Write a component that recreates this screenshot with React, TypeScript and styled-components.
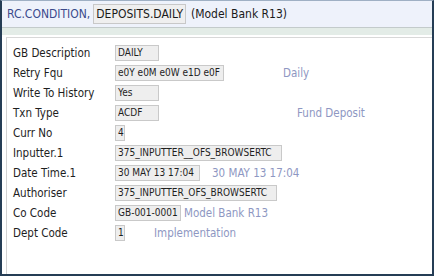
import React from "react";
import styled, { createGlobalStyle } from "styled-components";

const Global = createGlobalStyle`
  html, body { margin: 0; padding: 0; background: #ffffff; }
  body { font-family: "DejaVu Sans Condensed", "DejaVu Sans", sans-serif; }
`;

const Frame = styled.div`
  width: 434px;
  height: 276px;
  box-sizing: border-box;
  border-left: 2px solid #253d55;
  border-right: 2px solid #253d55;
  border-bottom: 2px solid #253d55;
  border-top: 1px solid #9fb0c4;
  display: flex;
  flex-direction: column;
  background: #ffffff;
  overflow: hidden;
`;

const Header = styled.div`
  height: 26px;
  background: #eef2fb;
  display: flex;
  align-items: center;
  padding-left: 5px;
  gap: 3px;
  font-size: 12px;
`;

const TitleText = styled.span`
  color: #3b4a8c;
`;

const TitleBox = styled.span`
  background: #efefef;
  border: 1px solid #c8c8c8;
  color: #1a1a1a;
  padding: 2px 2px;
`;

const TitleTail = styled.span`
  color: #1a1a1a;
  margin-left: 2px;
`;

const Strip = styled.div`
  height: 7px;
  border-top: 1px solid #c3cbcb;
  background: #e3ece7;
`;

const Body = styled.div`
  flex: 1;
  padding: 2px 0 0 4px;
  display: flex;
`;

const Panel = styled.div`
  flex: 1;
  border-left: 1px solid #d2d2d2;
  border-top: 1px solid #d8d8d8;
  padding: 5px 0 0 6px;
  display: flex;
  flex-direction: column;
`;

const Row = styled.div`
  height: 20px;
  display: flex;
  align-items: center;
`;

const Label = styled.span`
  width: 102px;
  font-size: 11.5px;
  color: #1e1e1e;
  white-space: nowrap;
`;

const Value = styled.span<{ $w: number }>`
  width: ${(p) => p.$w}px;
  height: 16px;
  box-sizing: border-box;
  background: #eeeeee;
  border: 1px solid #c9c9c9;
  font-size: 10px;
  line-height: 14px;
  color: #1e1e1e;
  padding-left: 2px;
  white-space: nowrap;
  overflow: hidden;
`;

const Desc = styled.span<{ $gap: number }>`
  margin-left: ${(p) => p.$gap}px;
  font-size: 11.5px;
  color: #8e97c2;
  white-space: nowrap;
`;

type Field = { label: string; value: string; w: number; desc?: string; gap?: number };

const fields: Field[] = [
  { label: "GB Description", value: "DAILY", w: 44 },
  { label: "Retry Fqu", value: "e0Y e0M e0W e1D e0F", w: 109, desc: "Daily", gap: 59 },
  { label: "Write To History", value: "Yes", w: 44 },
  { label: "Txn Type", value: "ACDF", w: 44, desc: "Fund Deposit", gap: 138 },
  { label: "Curr No", value: "4", w: 10 },
  { label: "Inputter.1", value: "375_INPUTTER__OFS_BROWSERTC", w: 167 },
  { label: "Date Time.1", value: "30 MAY 13 17:04", w: 85, desc: "30 MAY 13 17:04", gap: 12 },
  { label: "Authoriser", value: "375_INPUTTER_OFS_BROWSERTC", w: 162 },
  { label: "Co Code", value: "GB-001-0001", w: 66, desc: "Model Bank R13", gap: 3 },
  { label: "Dept Code", value: "1", w: 10, desc: "Implementation", gap: 29 },
];

export default function App() {
  return (
    <>
      <Global />
      <Frame>
        <Header>
          <TitleText>RC.CONDITION,</TitleText>
          <TitleBox>DEPOSITS.DAILY</TitleBox>
          <TitleTail>(Model Bank R13)</TitleTail>
        </Header>
        <Strip />
        <Body>
          <Panel>
            {fields.map((f) => (
              <Row key={f.label}>
                <Label>{f.label}</Label>
                <Value $w={f.w}>{f.value}</Value>
                {f.desc && <Desc $gap={f.gap ?? 0}>{f.desc}</Desc>}
              </Row>
            ))}
          </Panel>
        </Body>
      </Frame>
    </>
  );
}
